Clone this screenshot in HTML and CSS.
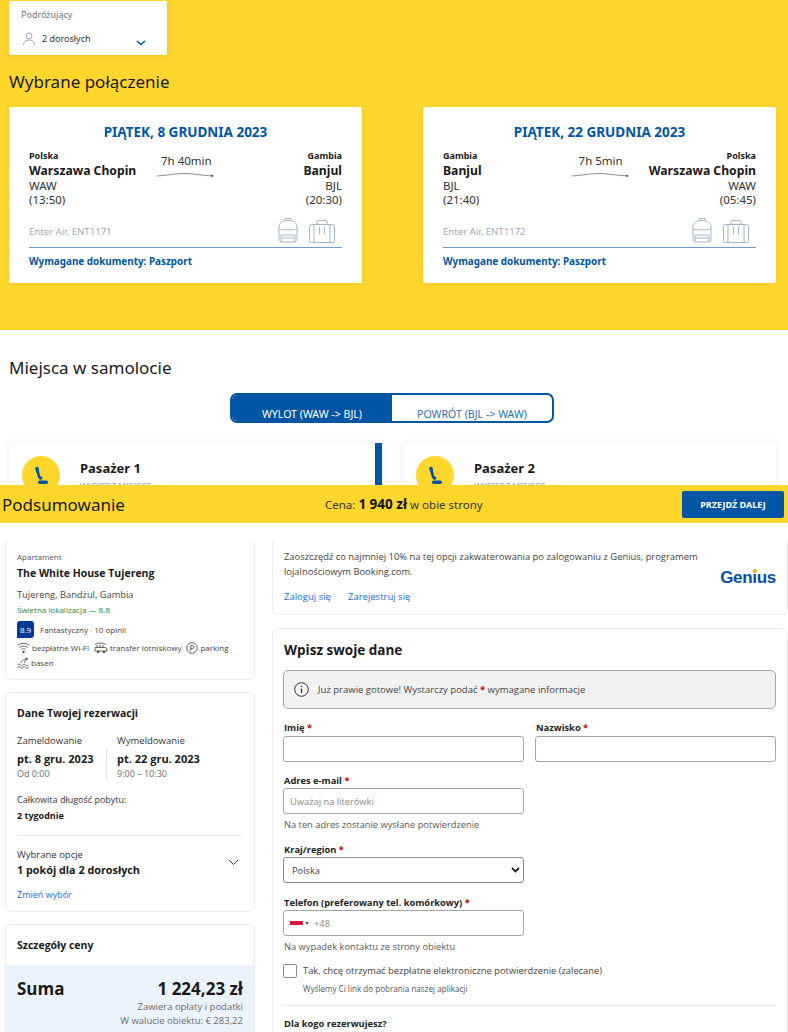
FILE: index.html
```html
<!DOCTYPE html>
<html lang="pl">
<head>
<meta charset="utf-8">
<title>Podsumowanie</title>
<link rel="stylesheet" href="styles.css">
</head>
<body>
<svg class="defs" width="0" height="0" aria-hidden="true">
  <symbol id="bag" viewBox="0 0 20 26"><g fill="none" stroke="currentColor" stroke-width="1"><path d="M1 10c0-4 3-6.500 9-6.500s9 2.500 9 6.500v12c0 2-1 3-3 3H4c-2 0-3-1-3-3z"/><path d="M7 3.500V1.500h6v2"/><path d="M1 12c3 1.200 15 1.200 18 0"/><path d="M3 18h14v7M3 18v7"/><path d="M3 21h14"/></g></symbol>
  <symbol id="case" viewBox="0 0 26 23"><g fill="none" stroke="currentColor" stroke-width="1"><rect x=".5" y="4.500" width="25" height="18" rx="2"/><path d="M8 4.500V1.500c0-.6.4-1 1-1h8c.6 0 1 .4 1 1v3"/><path d="M5 4.500v18M21 4.500v18M10.500 7v7M15.500 7v7"/></g></symbol>
  <symbol id="arrow" viewBox="0 0 58 6"><path d="M0 4C14 3 22 1 30 1.500S46 3.500 56 4" fill="none" stroke="#6b7280" stroke-width=".8"/><path d="M54 2.500l3 1.500-3 1z" fill="#555"/></symbol>
  <symbol id="seat" viewBox="0 0 14 20"><path d="M1.500 2.500c.5-1.200 3-1.200 3.200.5l1 6.500c.2 1 1 2 2 2.500l1 .8-1.200 2c-1.800 0-3-.8-3.500-2.300L1.300 4.200c-.1-.6 0-1.200.2-1.700z" fill="#0055a5"/><rect x="4" y="15.500" width="10" height="3.500" rx="1.700" fill="#0055a5"/></symbol>
</svg>

<section class="hero">
  <div class="traveller">
    <div class="traveller-label">Podróżujący</div>
    <div class="traveller-row">
      <svg class="person" width="14" height="14" viewBox="0 0 14 14"><circle cx="7" cy="4" r="3" fill="none" stroke="#9aa8bb"/><path d="M1.500 13c0-3.500 2.500-5 5.500-5s5.500 1.500 5.500 5" fill="none" stroke="#9aa8bb"/></svg>
      <span>2 dorosłych</span>
      <svg class="caret" width="10" height="6" viewBox="0 0 10 6"><path d="M1 1l4 3.500L9 1" fill="none" stroke="#0055a5" stroke-width="1.600"/></svg>
    </div>
  </div>
  <h2 class="section-title hero-title">Wybrane połączenie</h2>
  <div class="flights">
    <article class="flight">
      <h3 class="flight-date">PIĄTEK, 8 GRUDNIA 2023</h3>
      <div class="route">
        <div class="stop">
          <div class="country">Polska</div>
          <div class="city">Warszawa Chopin</div>
          <div class="code">WAW</div>
          <div class="code">(13:50)</div>
        </div>
        <div class="duration duration-a">7h 40min<svg class="curve" width="58" height="6"><use href="#arrow"/></svg></div>
        <div class="stop stop-end">
          <div class="country">Gambia</div>
          <div class="city">Banjul</div>
          <div class="code">BJL</div>
          <div class="code">(20:30)</div>
        </div>
      </div>
      <div class="carrier">
        <span>Enter Air, ENT1171</span>
        <div class="luggage">
          <svg width="20" height="26"><use href="#bag"/></svg>
          <svg width="26" height="23"><use href="#case"/></svg>
        </div>
      </div>
      <div class="docs">Wymagane dokumenty: Paszport</div>
    </article>
    <article class="flight">
      <h3 class="flight-date">PIĄTEK, 22 GRUDNIA 2023</h3>
      <div class="route">
        <div class="stop">
          <div class="country">Gambia</div>
          <div class="city">Banjul</div>
          <div class="code">BJL</div>
          <div class="code">(21:40)</div>
        </div>
        <div class="duration duration-b">7h 5min<svg class="curve" width="58" height="6"><use href="#arrow"/></svg></div>
        <div class="stop stop-end">
          <div class="country">Polska</div>
          <div class="city">Warszawa Chopin</div>
          <div class="code">WAW</div>
          <div class="code">(05:45)</div>
        </div>
      </div>
      <div class="carrier">
        <span>Enter Air, ENT1172</span>
        <div class="luggage">
          <svg width="20" height="26"><use href="#bag"/></svg>
          <svg width="26" height="23"><use href="#case"/></svg>
        </div>
      </div>
      <div class="docs">Wymagane dokumenty: Paszport</div>
    </article>
  </div>
</section>

<section class="seats">
  <h2 class="section-title seats-title">Miejsca w samolocie</h2>
  <div class="toggle">
    <div class="toggle-item toggle-on">WYLOT (WAW -&gt; BJL)</div>
    <div class="toggle-item">POWRÓT (BJL -&gt; WAW)</div>
  </div>
  <div class="passengers">
    <div class="passenger passenger-active">
      <div class="seat-badge"><svg width="14" height="20"><use href="#seat"/></svg></div>
      <div><div class="passenger-name">Pasażer 1</div><div class="passenger-hint">WYBIERZ MIEJSCE</div></div>
    </div>
    <div class="passenger">
      <div class="seat-badge"><svg width="14" height="20"><use href="#seat"/></svg></div>
      <div><div class="passenger-name">Pasażer 2</div><div class="passenger-hint">WYBIERZ MIEJSCE</div></div>
    </div>
  </div>
</section>

<div class="summary-bar">
  <div class="summary-title">Podsumowanie</div>
  <div class="summary-price">Cena: <strong>1 940 zł</strong> w obie strony</div>
  <button class="next-btn">PRZEJDŹ DALEJ</button>
</div>

<section class="booking">
  <aside class="side">
    <div class="card property">
      <div class="prop-type">Apartament</div>
      <div class="prop-name">The White House Tujereng</div>
      <div class="prop-addr">Tujereng, Bandżul, Gambia</div>
      <div class="prop-loc">Świetna lokalizacja — 8.8</div>
      <div class="prop-score"><span class="score">8.9</span><span>Fantastyczny · 10 opinii</span></div>
      <div class="amenities">
        <span class="amenity"><svg width="13" height="12" viewBox="0 0 13 12"><g fill="none" stroke="#555" stroke-width=".9"><path d="M.7 3.500c3.500-3 8.100-3 11.600 0"/><path d="M2.500 5.500c2.500-2 5.500-2 8 0"/><path d="M4.300 7.500c1.500-1 2.900-1 4.400 0"/></g><circle cx="6.500" cy="10" r="1.200" fill="#555"/></svg>bezpłatne Wi-Fi</span>
        <span class="amenity"><svg width="14" height="12" viewBox="0 0 14 12"><g fill="none" stroke="#555" stroke-width=".9"><path d="M1 9V5.500h10.500l1.500 1.500v2z"/><path d="M3 5.500V3M6 5.500V2.500M9 5.500V3"/><path d="M1 2.500c3-2 8-2 11 0"/></g><circle cx="4" cy="10" r="1.300" fill="#555"/><circle cx="10" cy="10" r="1.300" fill="#555"/></svg>transfer lotniskowy</span>
        <span class="amenity"><svg width="12" height="12" viewBox="0 0 12 12"><circle cx="6" cy="6" r="5.300" fill="none" stroke="#555" stroke-width=".9"/><path d="M4.800 9V3.500H6.500a1.500 1.500 0 010 3H4.800" fill="none" stroke="#555" stroke-width=".9"/></svg>parking</span>
        <span class="amenity"><svg width="12" height="12" viewBox="0 0 12 12"><g fill="none" stroke="#555" stroke-width=".9"><path d="M.5 8c1.500-1 2-1 3 0s1.500 1 2.500 0 1.500-1 2.500 0 1.500 1 3 0"/><path d="M.5 10.500c1.500-1 2-1 3 0s1.500 1 2.500 0 1.500-1 2.500 0 1.500 1 3 0"/><path d="M3.500 6c1-2 2.500-3 4-4M8 6V2.500"/></g><circle cx="9.500" cy="2" r="1.300" fill="#555"/></svg>basen</span>
      </div>
    </div>
    <div class="card stay">
      <div class="card-heading">Dane Twojej rezerwacji</div>
      <div class="dates">
        <div class="date-col">
          <div class="date-label">Zameldowanie</div>
          <div class="date-body date-body-first">
            <div class="date-value">pt. 8 gru. 2023</div>
            <div class="date-time">Od 0:00</div>
          </div>
        </div>
        <div class="date-col date-col-end">
          <div class="date-label">Wymeldowanie</div>
          <div class="date-body">
            <div class="date-value">pt. 22 gru. 2023</div>
            <div class="date-time">9:00 – 10:30</div>
          </div>
        </div>
      </div>
      <div class="date-label length-label">Całkowita długość pobytu:</div>
      <div class="length-value">2 tygodnie</div>
      <hr class="rule">
      <div class="options">
        <div>
          <div class="date-label">Wybrane opcje</div>
          <div class="option-value">1 pokój dla 2 dorosłych</div>
        </div>
        <svg width="11" height="7" viewBox="0 0 11 7"><path d="M1 1l4.500 4.500L10 1" fill="none" stroke="#444" stroke-width="1"/></svg>
      </div>
      <a class="link change-link">Zmień wybór</a>
    </div>
    <div class="card price">
      <div class="card-heading price-heading">Szczegóły ceny</div>
      <div class="price-body">
        <div class="price-row"><span>Suma</span><span>1 224,23 zł</span></div>
        <div class="price-note">Zawiera opłaty i podatki</div>
        <div class="price-note">W walucie obiektu: € 283,22</div>
      </div>
    </div>
  </aside>
  <main class="content">
    <div class="card genius">
      <div>
        <p class="genius-text">Zaoszczędź co najmniej 10% na tej opcji zakwaterowania po zalogowaniu z Genius, programem lojalnościowym Booking.com.</p>
        <div class="genius-links"><a class="link">Zaloguj się</a><a class="link">Zarejestruj się</a></div>
      </div>
      <div class="genius-logo">Gen<span class="genius-i">i</span>us</div>
    </div>
    <div class="card form">
      <h2 class="form-title">Wpisz swoje dane</h2>
      <div class="notice">
        <svg width="15" height="15" viewBox="0 0 15 15"><circle cx="7.500" cy="7.500" r="6.800" fill="none" stroke="#333"/><path d="M7.500 6.500v4.500" stroke="#333" stroke-width="1.200"/><circle cx="7.500" cy="4.500" r=".8" fill="#333"/></svg>
        <span>Już prawie gotowe! Wystarczy podać <b class="req">*</b> wymagane informacje</span>
      </div>
      <div class="name-row">
        <div class="field"><label class="label">Imię <b class="req">*</b></label><div class="input"></div></div>
        <div class="field"><label class="label">Nazwisko <b class="req">*</b></label><div class="input"></div></div>
      </div>
      <div class="field half field-email"><label class="label">Adres e-mail <b class="req">*</b></label><div class="input placeholder">Uważaj na literówki</div><div class="help">Na ten adres zostanie wysłane potwierdzenie</div></div>
      <div class="field half field-country"><label class="label">Kraj/region <b class="req">*</b></label>
        <div class="input select"><span>Polska</span><svg width="9" height="6" viewBox="0 0 9 6"><path d="M1 1l3.500 3.500L8 1" fill="none" stroke="#222" stroke-width="1.800"/></svg></div>
      </div>
      <div class="field half field-phone"><label class="label">Telefon (preferowany tel. komórkowy) <b class="req">*</b></label>
        <div class="input placeholder phone"><i class="flag"></i><i class="flag-caret"></i><span>+48</span></div>
        <div class="help">Na wypadek kontaktu ze strony obiektu</div>
      </div>
      <div class="consent">
        <span class="checkbox"></span>
        <div><div class="consent-text">Tak, chcę otrzymać bezpłatne elektroniczne potwierdzenie (zalecane)</div><div class="consent-sub">Wyślemy Ci link do pobrania naszej aplikacji</div></div>
      </div>
      <hr class="rule form-rule">
      <div class="label">Dla kogo rezerwujesz?</div>
    </div>
  </main>
</section>
</body>
</html>
```
FILE: styles.css
```css
* { box-sizing: border-box; }
html, body { margin: 0; padding: 0; }
body { width: 788px; height: 1032px; overflow: hidden; background: #fff; color: #1a1a1a; font-family: "Noto Sans", "Open Sans", sans-serif; }
.defs { position: absolute; }
h2, h3, p { margin: 0; font-weight: 400; }

.hero { height: 330px; background: #ffd72c; padding: 1px 12px 0 9px; }
.traveller { width: 158px; height: 54px; background: #fff; border-radius: 2px; padding: 8px 12px; box-shadow: 0 2px 10px rgba(160,120,0,.18); }
.traveller-label { font-size: 9px; line-height: 12px; color: #6b7280; }
.traveller-row { display: flex; align-items: center; margin-top: 10px; font-size: 9px; color: #333; }
.person { margin: 0 6px 0 1px; }
.caret { margin: 9px 0 0 45px; }
.section-title { font-size: 17px; line-height: 24px; }
.hero-title { margin-top: 15px; }
.flights { display: flex; justify-content: space-between; margin-top: 13px; }
.flight { width: 353px; height: 176px; background: #fff; border-radius: 2px; padding: 16px 20px 0; box-shadow: 0 1px 6px rgba(160,120,0,.15); }
.flight-date { text-align: center; font-size: 13.500px; line-height: 18px; font-weight: 700; color: #0055a5; }
.route { display: flex; justify-content: space-between; margin-top: 9px; }
.stop-end { text-align: right; }
.country { font-size: 9px; line-height: 11px; font-weight: 700; }
.city { margin-top: 2px; font-size: 12.200px; line-height: 16px; font-weight: 700; }
.code { font-size: 11.500px; line-height: 13.500px; color: #333; }
.duration { width: 58px; flex: none; text-align: center; font-size: 11.500px; line-height: 16px; white-space: nowrap; color: #333; margin-top: 3px; }
.duration-a { margin-right: 67px; }
.duration-b { margin-left: 71px; }
.curve { display: block; margin-top: 3px; }
.carrier { display: flex; justify-content: space-between; align-items: flex-end; height: 40px; margin-top: 2px; padding-bottom: 4px; border-bottom: 1px solid #6f9ac9; font-size: 9.600px; line-height: 16px; color: #9dabba; }
.carrier span { margin-bottom: 3px; }
.luggage { display: flex; align-items: flex-end; gap: 11px; padding-right: 7px; color: #a5b5c8; }
.docs { margin-top: 6px; font-size: 9.900px; line-height: 14px; font-weight: 700; color: #0055a5; }

.seats { height: 155px; overflow: hidden; padding: 26px 12px 0 9px; }
.seats-title { line-height: 24px; }
.toggle { display: flex; width: 324px; height: 30px; margin: 13px 0 0 221px; border: 2px solid #0055a5; border-radius: 7px; overflow: hidden; }
.toggle-item { flex: 1; padding-top: 12px; text-align: center; font-size: 10.600px; line-height: 14px; color: #2e70b5; }
.toggle-on { background: #0055a5; color: #fff; }
.passengers { display: flex; justify-content: space-between; margin-top: 20px; }
.passenger { display: flex; gap: 20px; width: 373px; height: 100px; padding: 13px 13px; box-shadow: 0 0 6px rgba(0,0,0,.08); }
.passenger-active { border-right: 7px solid #0055a5; }
.seat-badge { display: flex; align-items: center; justify-content: center; flex: none; width: 38px; height: 38px; border-radius: 50%; background: #ffd72c; }
.passenger-name { margin-top: 3px; font-size: 13px; line-height: 18px; font-weight: 700; }
.passenger-hint { margin-top: 4px; font-size: 8.500px; line-height: 12px; color: #9aa3ad; }

.summary-bar { display: flex; align-items: center; height: 38px; background: #ffd72c; padding: 0 4px 0 2px; }
.summary-title { width: 228px; font-size: 17px; }
.summary-price { width: 357px; margin-left: 95px; font-size: 11.500px; color: #333; }
.summary-price strong { font-size: 13.500px; color: #111; }
.next-btn { width: 102px; height: 27px; border: 0; border-radius: 2px; background: #0055a5; color: #fff; font: 700 9px "Noto Sans", sans-serif; }

.booking { display: flex; gap: 17px; padding: 15px 0 0 5px; height: 509px; overflow: hidden; font-family: "Open Sans", "Noto Sans", sans-serif; }
.card { flex: none; border: 1px solid #ececec; border-radius: 6px; background: #fff; }
.side { display: flex; flex-direction: column; gap: 12px; width: 250px; flex: none; }
.property { height: 142px; padding: 12px 11px; border-top-color: #fff; }
.prop-type { font-size: 8px; line-height: 11px; color: #555; }
.prop-name { margin-top: 4px; font-size: 10.500px; line-height: 15px; font-weight: 700; }
.prop-addr { margin-top: 7px; font-size: 9.300px; line-height: 13px; color: #444; }
.prop-loc { margin-top: 3px; font-size: 8px; line-height: 11px; color: #138a4c; }
.prop-score { display: flex; align-items: center; gap: 6px; margin-top: 6px; font-size: 8px; color: #444; }
.score { width: 17px; height: 17px; border-radius: 3px 3px 3px 0; background: #003b95; color: #fff; font-size: 8px; line-height: 17px; text-align: center; }
.amenities { display: flex; flex-wrap: wrap; gap: 0 5px; margin-top: 2px; font-size: 8px; line-height: 15px; color: #444; }
.amenity { display: flex; align-items: center; gap: 2px; }
.stay { height: 220px; padding: 13px 11px; }
.card-heading { font-size: 10.500px; line-height: 14px; font-weight: 700; }
.dates { display: flex; margin-top: 14px; }
.date-col { width: 100px; }
.date-body { padding-top: 3px; height: 31px; margin-top: 2px; }
.date-body-first { border-right: 1px solid #e4e4e4; width: 90px; }
.date-label { font-size: 9.500px; line-height: 13px; color: #333; }
.date-value { font-size: 11px; line-height: 14px; font-weight: 700; white-space: nowrap; }
.date-time { margin-top: 2px; font-size: 9px; line-height: 12px; color: #6b6b6b; }
.length-label { margin-top: 13px; font-size: 9px; }
.length-value { margin-top: 3px; font-size: 9px; line-height: 14px; font-weight: 700; }
.rule { height: 1px; margin: 12px 0 0; border: 0; background: #ececec; }
.options { display: flex; justify-content: space-between; align-items: center; padding-right: 4px; margin-top: 12px; }
.option-value { margin-top: 2px; font-size: 10.800px; line-height: 14px; font-weight: 700; }
.link { font-size: 9.500px; line-height: 13px; color: #1a6be0; }
.change-link { display: block; margin-top: 11px; font-size: 9px; font-weight: 500; }
.price { height: 130px; overflow: hidden; }
.price-heading { padding: 13px 11px; height: 40px; }
.price-body { background: #ebf3ff; height: 90px; padding: 14px 11px; }
.price-row { display: flex; justify-content: space-between; font-size: 17px; line-height: 20px; font-weight: 700; margin-bottom: 1px; }
.price-note { font-size: 9.500px; line-height: 14px; color: #6b6b6b; text-align: right; }

.content { flex: none; width: 516px; display: flex; flex-direction: column; gap: 13px; }
.genius { display: flex; justify-content: space-between; align-items: center; height: 77px; padding: 11px 11px; border-top-color: #fff; }
.genius-text { width: 430px; font-size: 9.400px; line-height: 14.500px; color: #444; }
.genius-links { display: flex; gap: 17px; margin-top: 11px; }
.genius-logo { font: 700 17px "Liberation Sans", sans-serif; letter-spacing: -.3px; color: #0a4ea8; margin-top: 3px; }
.genius-i { position: relative; }
.genius-i::after { content: ""; position: absolute; left: .5px; top: 1px; width: 4px; height: 4px; border-radius: 50%; background: #febb02; }
.form { padding: 11px 11px 0 10px; height: 420px; border-radius: 6px 6px 0 0; }
.form-title { margin-left: 1px; font-size: 13.500px; line-height: 20px; font-weight: 700; }
.notice { display: flex; align-items: center; gap: 9px; height: 39px; margin-top: 10px; padding-left: 10px; background: #f2f2f2; border: 1px solid #a6a6a6; border-radius: 5px; font-size: 9.500px; color: #444; }
.req { color: #c00; font-weight: 700; }
.name-row { display: flex; gap: 11px; margin-top: 12px; }
.name-row .field { flex: 1; }
.label { display: block; margin-left: 1px; font-size: 9.300px; line-height: 13px; font-weight: 700; color: #222; }
.input { height: 26px; margin-top: 2px; border: 1px solid #a6a6a6; border-radius: 3px; background: #fff; }
.half { width: 241px; }
.field-email { margin-top: 12px; }
.field-email .input { margin-top: 1px; }
.placeholder { display: flex; align-items: center; padding-left: 6px; font-size: 9.300px; color: #8a8a8a; }
.help { margin: 4px 0 0 1px; font-size: 9.300px; line-height: 13px; color: #595959; }
.field-country { margin-top: 12px; }
.select { display: flex; justify-content: space-between; align-items: center; margin-top: 1px; padding: 0 3px 0 8px; font-size: 9.300px; color: #444; border-color: #8c8c8c; }
.field-phone { margin-top: 13px; }
.phone { gap: 2px; margin-top: 1px; }
.flag { width: 13px; height: 4px; background: #dc143c; }
.flag-caret { width: 0; height: 0; border: 2px solid transparent; border-top: 3px solid #666; border-bottom: 0; margin-right: 3px; }
.consent { display: flex; gap: 6px; margin-top: 10px; }
.checkbox { width: 14px; height: 14px; flex: none; margin-top: 1px; border: 1px solid #8c8c8c; border-radius: 2px; }
.consent-text { margin-top: 1px; font-size: 9.350px; line-height: 14px; color: #444; }
.consent-sub { margin-top: 5px; font-size: 8.100px; line-height: 11px; color: #555; }
.form-rule { margin: 11px 0 11px; }
```
